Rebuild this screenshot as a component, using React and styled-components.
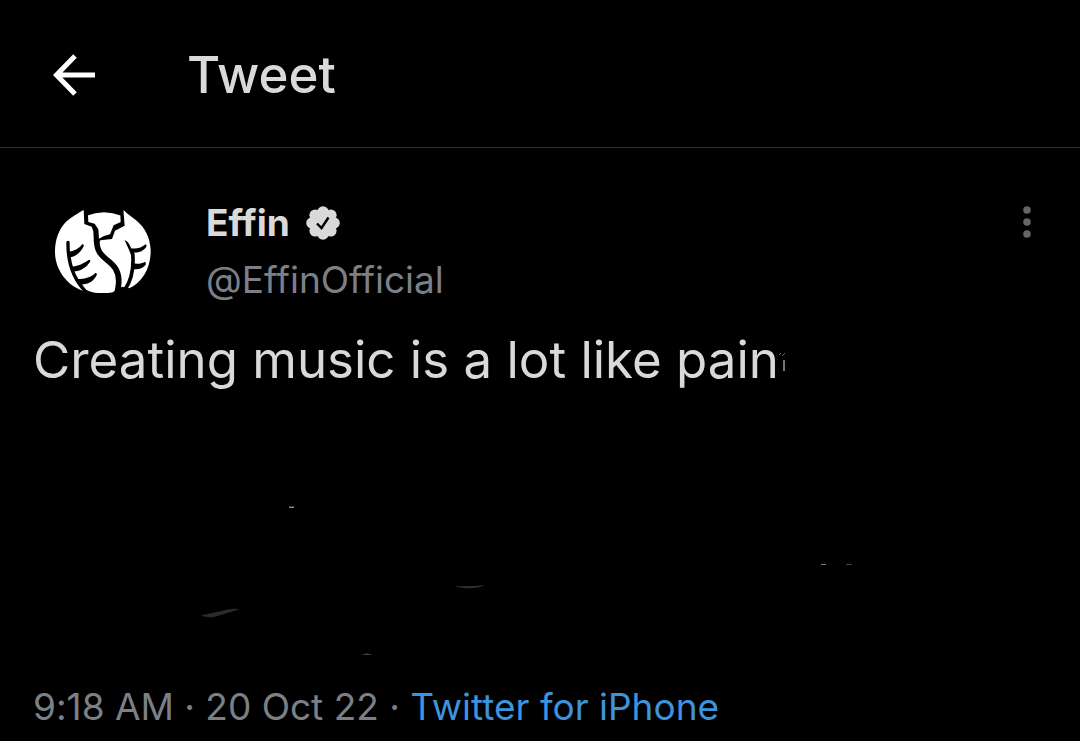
import styled, { createGlobalStyle } from "styled-components";

export default function App() {
  return (
    <>
      <GlobalStyle />
      <Page>
        <Header>
          <IconButton aria-label="Back">
            <svg width="42" height="42" viewBox="0 0 42 42" fill="none" stroke="#ffffff" strokeWidth="5">
              <path d="M42 21H4M22 2L3.500 21L22 40" />
            </svg>
          </IconButton>
          <Title>Tweet</Title>
        </Header>

        <Tweet>
          <Author>
            <Avatar />
            <Names>
              <Name>
                Effin
                <Badge />
              </Name>
              <Handle href="#profile">@EffinOfficial</Handle>
            </Names>
            <IconButton aria-label="More options">
              <svg width="8" height="34" viewBox="0 0 8 34" fill="#666666">
                <circle cx="4" cy="5" r="3.8" />
                <circle cx="4" cy="17" r="3.8" />
                <circle cx="4" cy="29" r="3.8" />
              </svg>
            </IconButton>
          </Author>

          <Text>
            Creating music is a lot like pain
            <svg width="8" height="30" viewBox="0 0 8 30" fill="none" stroke="#d9d9d9">
              <path d="M0 7l2-2M3 8l3-3" strokeOpacity="0.5" />
              <path d="M5 12v11" strokeWidth="1.500" strokeOpacity="0.7" />
            </svg>
          </Text>

          <Scratches />

          <Info>
            9:18 AM · 20 Oct 22 · <Source href="#source">Twitter for iPhone</Source>
          </Info>
        </Tweet>
      </Page>
    </>
  );
}

function Avatar() {
  return (
    <AvatarSvg viewBox="75 57 291 261" role="img" aria-label="Effin">
      <path
        fill="#ffffff"
        d="M160 60C142 72 124 80 110 94C86 117 75 150 75 186C75 234 106 284 158 302L166 298C180 306 190 309 205 309H232C245 309 252 305 260 299L293 297C340 278 363 230 362 180C360 140 344 112 320 92C306 80 292 74 281 60L274 77Q222 56 170 77Z"
      />
      <path d="M161 57L163 102L185 110L190 124L192 160L207 160L211 151L246 147L255 122L284 107L280 57L271 76L272 96L251 106L240 133L222 138L207 146L205 118L194 101L175 96L174 76Z" />
      <g fill="none" stroke="#000000" strokeLinejoin="round">
        <path strokeWidth="17" d="M200 148C199 204 236 203 256 235C271 259 267 285 260 314" />
        <path strokeWidth="10" strokeLinecap="round" d="M114 157C113 208 126 262 166 304" />
        <path strokeWidth="11" strokeLinecap="round" d="M308 188C312 232 308 265 286 297" />
      </g>
      <path d="M284 151C292 153 300 163 303 175C320 178 335 173 347 163Q351 165 349 170C340 184 325 189 308 187L303 195C298 181 290 164 284 151Z" />
      <path d="M308 220C323 223 335 221 345 215Q349 218 347 224C338 236 324 239 309 237Z" />
      <path d="M116 185C134 184 148 174 157 163Q163 163 161 169C153 186 138 200 119 202Z" />
      <path d="M122 230C145 229 162 219 177 209Q183 210 180 216C167 234 150 245 128 244Z" />
      <path d="M142 267C166 267 184 261 196 249Q202 249 200 256C190 276 172 284 150 284Z" />
      <path d="M262 299L276 290L298 294L285 312H260Z" />
    </AvatarSvg>
  );
}

function Badge() {
  return (
    <svg width="34" height="34" viewBox="0 0 34 34" role="img" aria-label="Verified">
      <g fill="#d9d9d9">
        <circle cx="17" cy="17" r="13" />
        <circle cx="17" cy="6" r="5.800" />
        <circle cx="24.800" cy="9.200" r="5.800" />
        <circle cx="28" cy="17" r="5.800" />
        <circle cx="24.800" cy="24.800" r="5.800" />
        <circle cx="17" cy="28" r="5.800" />
        <circle cx="9.200" cy="24.800" r="5.800" />
        <circle cx="6" cy="17" r="5.800" />
        <circle cx="9.200" cy="9.200" r="5.800" />
      </g>
      <path d="M11 17.500l4.500 4.500L22.500 11.500" fill="none" stroke="#000000" strokeWidth="2.400" />
    </svg>
  );
}

function Scratches() {
  return (
    <ScratchesSvg viewBox="33 400 1014 280" preserveAspectRatio="xMinYMin meet" aria-hidden="true">
      <path fill="#2b2b2b" d="M201 615.500L229 609.200Q235 608 239 609.500L214 617Q206 618 201 615.500Z" />
      <path fill="#303030" d="M455 586Q470 587 485 585Q478 588.500 468 588.200Q459 588 455 586Z" />
      <path fill="#8a8a8a" d="M289 506.500h5v1.500h-5z" />
      <path fill="#8a8a8a" d="M362 654.500q5-1.500 10 0z" />
      <path fill="#777777" d="M821 564h5v-1v2h-5z" />
      <path fill="#444444" d="M846 564h6v1h-6z" />
    </ScratchesSvg>
  );
}

const GlobalStyle = createGlobalStyle`
  * {
    box-sizing: border-box;
  }

  body {
    margin: 0;
    background-color: #000000;
    font-family: Inter, "Liberation Sans", sans-serif;
    font-variant-ligatures: none;
    color: #d9d9d9;
  }
`;

const Page = styled.main`
  background-color: #000000;
`;

const Header = styled.header`
  height: 148px;
  display: flex;
  align-items: center;
  gap: 92px;
  padding: 2px 53px 0;
  border-bottom: 1px solid #2f2f2f;
`;

const IconButton = styled.button`
  display: flex;
  padding: 0;
  border: none;
  background: none;
  cursor: pointer;
`;

const Title = styled.h1`
  margin: 0;
  font-size: 51px;
  line-height: 60px;
  font-weight: 500;
`;

const Tweet = styled.article`
  padding: 47px 33px 0;
`;

const Author = styled.div`
  display: flex;
  align-items: flex-start;
  padding: 0 16px 0 22px;

  button {
    margin-top: 10px;
  }
`;

const AvatarSvg = styled.svg`
  width: 97px;
  height: 87px;
  margin-top: 14px;
`;

const Names = styled.div`
  flex: 1;
  padding-left: 54px;
`;

const Name = styled.h2`
  display: flex;
  align-items: center;
  gap: 16px;
  margin: 0;
  font-size: 37px;
  line-height: 56px;
  font-weight: 700;
`;

const Handle = styled.a`
  display: block;
  font-size: 37px;
  line-height: 58px;
  color: #7c8086;
  text-decoration: none;
`;

const Text = styled.p`
  margin: 15px 0 0;
  font-size: 51px;
  line-height: 72px;
`;

const ScratchesSvg = styled.svg`
  display: block;
  width: 100%;
  height: 280px;
  margin-top: 4px;
`;

const Info = styled.p`
  margin: 0;
  font-size: 37px;
  line-height: 54px;
  color: #7c8086;
`;

const Source = styled.a`
  color: #3d93dc;
  text-decoration: none;
`;
